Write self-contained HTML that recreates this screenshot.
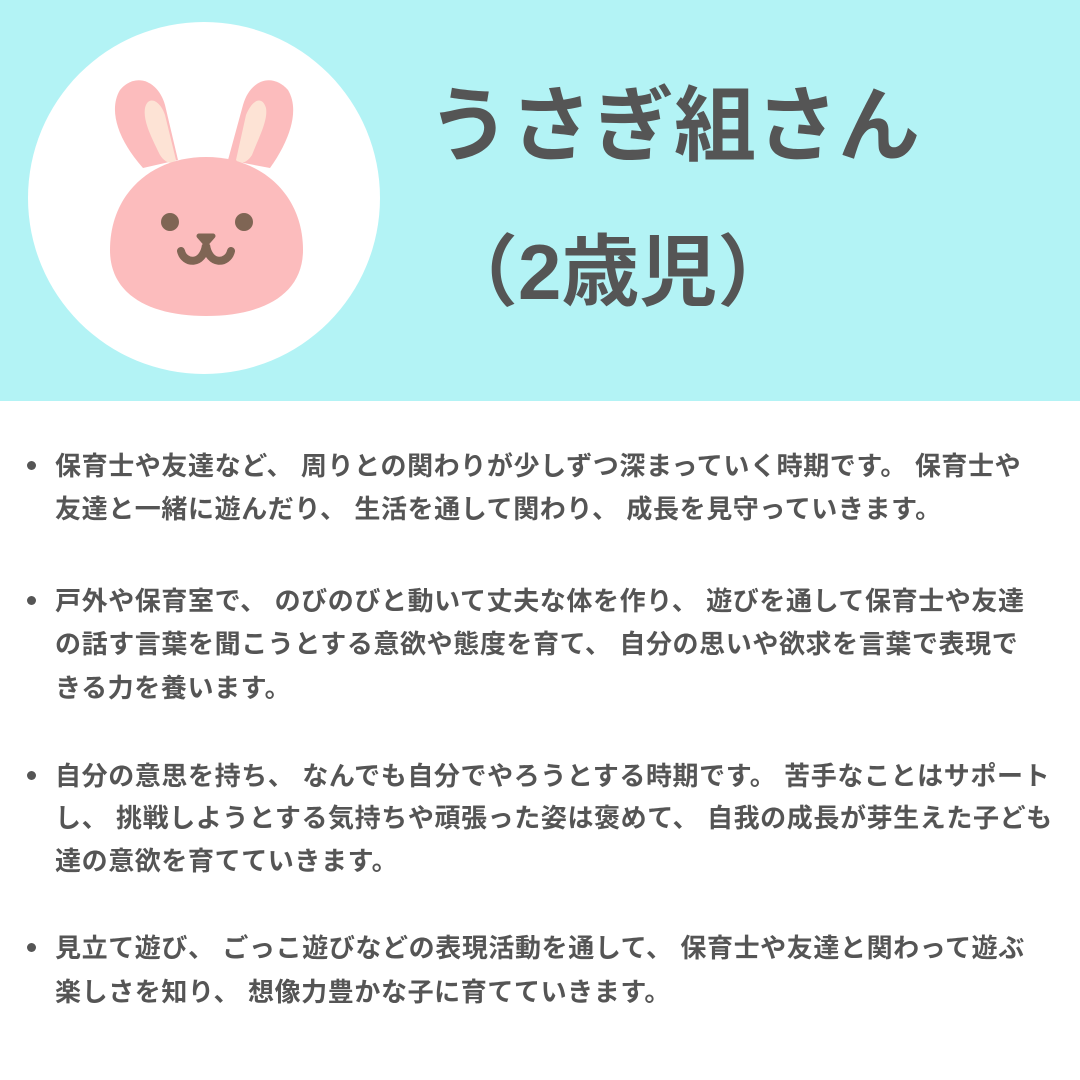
<!DOCTYPE html>
<html><head><meta charset="utf-8"><style>
body{margin:0;width:1080px;height:1080px;background:#fff;position:relative;overflow:hidden;font-family:"Liberation Sans","Noto Sans CJK JP",sans-serif;color:#555}
.band{position:absolute;left:0;top:0;width:1080px;height:401px;background:#b3f3f5}
.circle{position:absolute;left:28px;top:22px;width:352px;height:352px;border-radius:50%;background:#fff}
.t{position:absolute;font-weight:bold;white-space:nowrap;color:#555}
.l{position:absolute;left:55px;font-size:26px;font-weight:bold;letter-spacing:0.6px;white-space:nowrap;line-height:30px}
.b{position:absolute;left:27px;width:9px;height:9px;border-radius:50%;background:#555}
</style></head><body>
<div class="band"></div>
<div class="circle"></div>
<svg style="position:absolute;left:0;top:0" width="400" height="400">
<path d="M143 168 C118 140 108 110 120 90 C135 72 158 80 165 105 L178 160 Z" fill="#fcbcbd"/>
<path d="M270 168 C290 140 300 110 288 90 C272 72 250 80 243 105 L228 160 Z" fill="#fcbcbd"/>
<path d="M145 108 C148 95 160 100 165 115 L176 160 C172 165 165 163 160 155 C150 135 143 120 145 108Z" fill="#fde3d5"/>
<path d="M266 108 C262 95 252 100 246 115 L236 160 C240 165 247 163 252 155 C260 135 268 120 266 108Z" fill="#fde3d5"/>
<path d="M206 157 C150 157 110 195 110 250 C110 295 150 316 206 316 C262 316 303 295 303 250 C303 195 262 157 206 157Z" fill="#fcbcbd"/>
<circle cx="170" cy="222" r="9" fill="#7f6554"/>
<circle cx="244" cy="222" r="9" fill="#7f6554"/>
<path d="M199 236 L213 236 L206 244 Z" fill="#7f6554" stroke="#7f6554" stroke-width="5" stroke-linejoin="round"/>
<path d="M181 251 C184 264 203 266 206 245 C209 266 228 264 231 251" fill="none" stroke="#7f6554" stroke-width="8" stroke-linecap="round"/>
</svg>
<div class="t" style="left:428px;top:72px;font-size:82px;line-height:110px">うさぎ組さん</div>
<div class="t" style="left:440px;top:217px;font-size:78px;line-height:110px">（2歳児）</div>

<div class="b" style="top:461px"></div>
<div class="l" style="top:451px">保育士や友達など、 周りとの関わりが少しずつ深まっていく時期です。 保育士や</div>
<div class="l" style="top:494px">友達と一緒に遊んだり、 生活を通して関わり、 成長を見守っていきます。</div>

<div class="b" style="top:596px"></div>
<div class="l" style="top:586px">戸外や保育室で、 のびのびと動いて丈夫な体を作り、 遊びを通して保育士や友達</div>
<div class="l" style="top:629px">の話す言葉を聞こうとする意欲や態度を育て、 自分の思いや欲求を言葉で表現で</div>
<div class="l" style="top:673px">きる力を養います。</div>

<div class="b" style="top:771px"></div>
<div class="l" style="top:761px">自分の意思を持ち、 なんでも自分でやろうとする時期です。 苦手なことはサポート</div>
<div class="l" style="top:803px">し、 挑戦しようとする気持ちや頑張った姿は褒めて、 自我の成長が芽生えた子ども</div>
<div class="l" style="top:846px">達の意欲を育てていきます。</div>

<div class="b" style="top:943px"></div>
<div class="l" style="top:933px">見立て遊び、 ごっこ遊びなどの表現活動を通して、 保育士や友達と関わって遊ぶ</div>
<div class="l" style="top:977px">楽しさを知り、 想像力豊かな子に育てていきます。</div>
</body></html>
